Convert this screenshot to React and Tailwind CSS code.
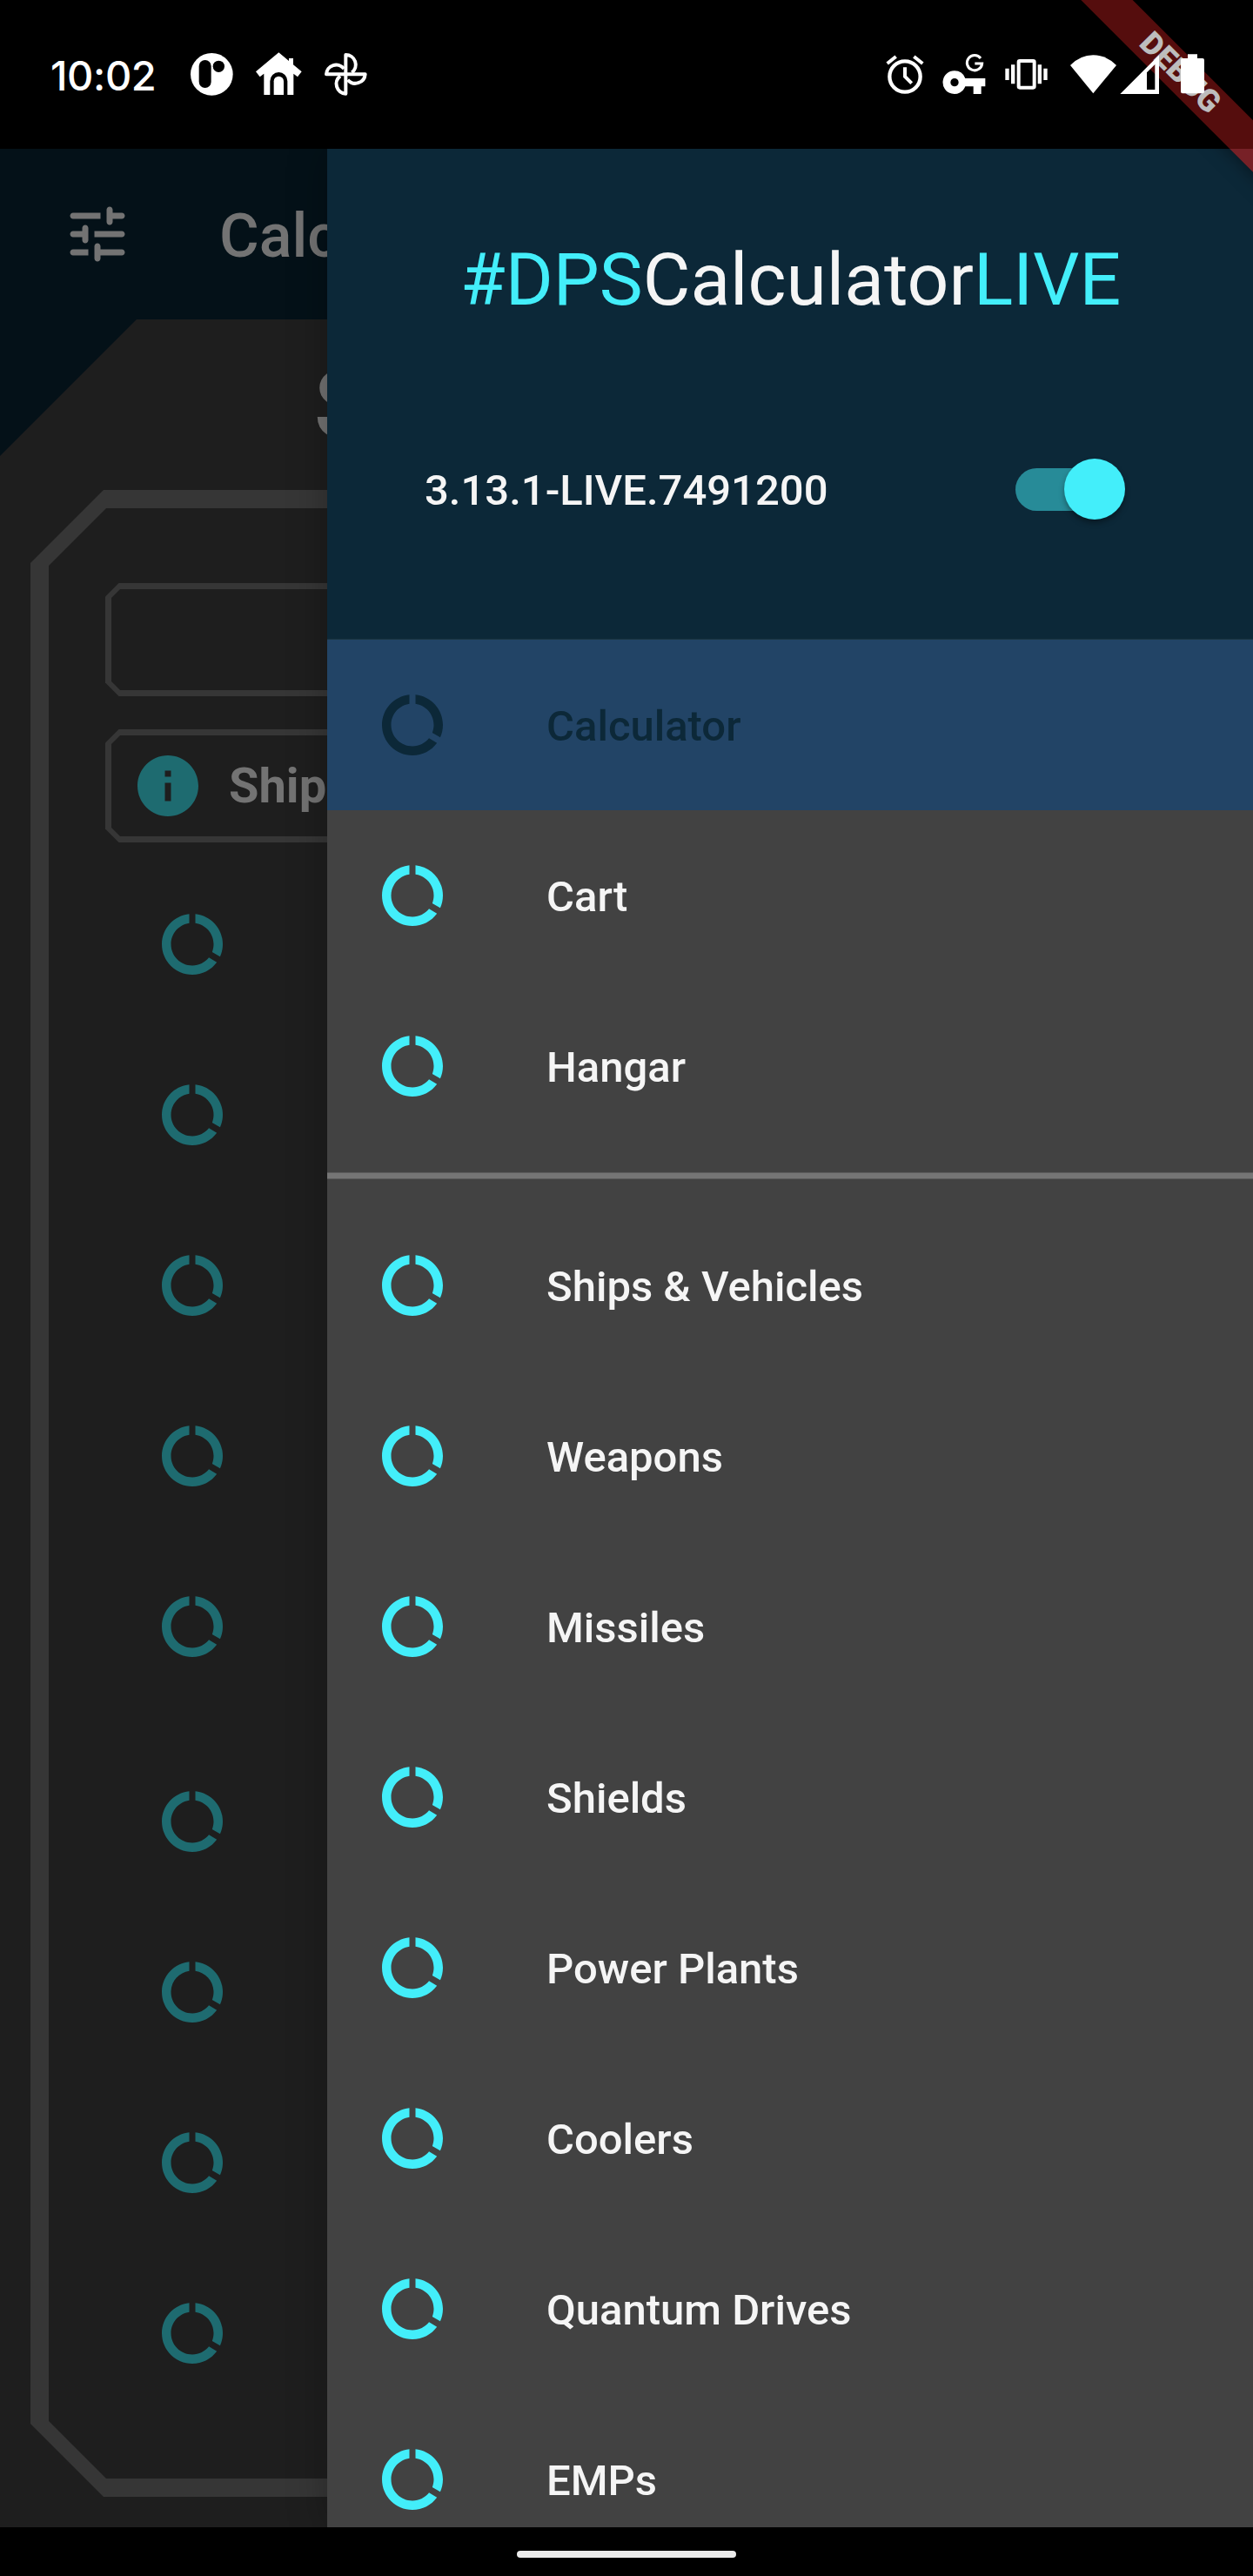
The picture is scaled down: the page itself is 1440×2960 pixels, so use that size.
const DATA_USAGE =
  "M13 2.05v3.03c3.39.49 6 3.39 6 6.92 0 .9-.18 1.75-.48 2.54l2.6 1.53c.56-1.24.88-2.62.88-4.07 0-5.18-3.95-9.45-9-9.95zM12 19c-3.87 0-7-3.13-7-7 0-3.53 2.61-6.43 6-6.92V2.05c-5.06.5-9 4.76-9 9.95 0 5.52 4.47 10 9.99 10 3.31 0 6.24-1.61 8.06-4.09l-2.6-1.53C16.17 17.98 14.21 19 12 19z";
const INFO =
  "M12 2C6.48 2 2 6.48 2 12s4.48 10 10 10 10-4.48 10-10S17.52 2 12 2zm1 15h-2v-6h2v6zm0-8h-2V7h2v2z";
const TUNE =
  "M3 18c0 .55.45 1 1 1h5v-2H4c-.55 0-1 .45-1 1zM3 6c0 .55.45 1 1 1h9V5H4c-.55 0-1 .45-1 1zm10 14v-1h7c.55 0 1-.45 1-1s-.45-1-1-1h-7v-1c0-.55-.45-1-1-1s-1 .45-1 1v4c0 .55.45 1 1 1s1-.45 1-1zM7 10v1H4c-.55 0-1 .45-1 1s.45 1 1 1h3v1c0 .55.45 1 1 1s1-.45 1-1v-4c0-.55-.45-1-1-1s-1 .45-1 1zm14 2c0-.55-.45-1-1-1h-9v2h9c.55 0 1-.45 1-1zm-5-3c.55 0 1-.45 1-1V7h3c.55 0 1-.45 1-1s-.45-1-1-1h-3V4c0-.55-.45-1-1-1s-1 .45-1 1v4c0 .55.45 1 1 1z";

function Icon({ d, className }) {
  return (
    <svg viewBox="0 0 24 24" className={"size-[84px] shrink-0 fill-current " + className}>
      <path d={d} />
    </svg>
  );
}

function StatusBar() {
  return (
    <div className="relative z-30 flex h-[171px] shrink-0 items-start bg-black/26 pl-[58px] pr-[55px] text-white">
      <span className="mt-[57px] w-[160px] font-['Inter'] text-[47px] font-medium leading-[60px] tracking-[-0.4px]">
        10:02
      </span>
      <div className="mt-[60px] flex gap-6">
        <svg viewBox="654 180 153 153" className="h-[51px] w-[51px]">
          <circle cx="730" cy="256" r="73" fill="#fff" />
          <rect x="686" y="207" width="42" height="96" rx="21" fill="#000" />
          <circle cx="754" cy="229" r="20" fill="#000" />
        </svg>
        <svg viewBox="879 180 165 153" className="h-[51px] w-[55px]" fill="#fff">
          <path d="M961 181L996 210V201H1011V223L1040 247L1026 265L1012 254V327H991V280A30 31 0 0 0 931 280V327H910V254L896 265L882 247Z" />
          <path d="M944 327V280A17 17 0 0 1 978 280V327Z" />
        </svg>
        <svg viewBox="1116 180 153 153" className="h-[51px] w-[51px]" fill="none" stroke="#fff" strokeWidth="12" strokeLinejoin="round">
          <path d="M1192 256V189A34 34 0 0 1 1213 250" />
          <path d="M1192 256H1125A34 34 0 0 1 1186 237" />
          <path d="M1192 256V323A34 34 0 0 1 1173 262" />
          <path d="M1192 256H1259A34 34 0 0 1 1199 275" />
        </svg>
      </div>
      <div className="ml-auto mt-[60px] flex">
        <svg viewBox="114 180 132 153" className="mr-[21px] h-[51px] w-[44px]" fill="none" stroke="#fff">
          <circle cx="180" cy="264" r="53" strokeWidth="13" />
          <path d="M180 232V264L203 287" strokeWidth="12" />
          <path d="M119 219L149 195M211 195L241 219" strokeWidth="12" />
        </svg>
        <svg viewBox="309 180 150 153" className="mr-[21px] h-[51px] w-[50px]">
          <path
            fill="#fff"
            fillRule="evenodd"
            d="M351 244A40 40 0 0 1 388 270H457V298H443V324H416V298H388A40 40 0 1 1 351 244ZM351 270A14 14 0 1 0 351 298A14 14 0 1 0 351 270Z"
          />
          <path d="M441 201A26 26 0 1 0 446 219H421" fill="none" stroke="#fff" strokeWidth="9" />
        </svg>
        <svg viewBox="522 180 150 153" className="mr-[25px] h-[51px] w-[50px]" fill="#fff">
          <rect x="572" y="210" width="54" height="92" rx="4" fill="none" stroke="#fff" strokeWidth="12" />
          <path d="M546 223H559V289H546ZM638 223H651V289H638ZM526 236H539V276H526ZM658 236H671V276H658Z" />
        </svg>
        <svg viewBox="747 180 165 153" className="mr-[3px] h-[51px] w-[55px]" fill="#fff">
          <path d="M829 322L750 225Q785 190 829 190T909 225Z" />
        </svg>
        <svg viewBox="921 180 135 153" className="mr-6 h-[51px] w-[45px]" fill="#fff">
          <path fillRule="evenodd" d="M922 324L1056 190V324ZM1014 309H1042V222L1014 250Z" />
        </svg>
        <svg viewBox="1128 180 87 153" className="h-[51px] w-[29px]" fill="#fff">
          <path d="M1155 187H1188V201H1206Q1212 201 1212 207V316Q1212 322 1206 322H1137Q1131 322 1131 316V207Q1131 201 1137 201H1155Z" />
        </svg>
      </div>
    </div>
  );
}

function DebugBanner() {
  return (
    <div className="pointer-events-none absolute right-0 top-0 z-20 h-[240px] w-[240px] overflow-hidden">
      <div className="absolute left-[-94px] top-[63px] flex h-[42px] w-[500px] rotate-45 items-center justify-center bg-[#b71c1ca0] font-['Roboto'] text-[35.700px] font-black leading-none text-white shadow-[0_0_21px_rgba(0,0,0,0.5)]">
        DEBUG
      </div>
    </div>
  );
}

function CutBox({ className, children }) {
  return (
    <div className={"h-[130px] w-[1198px] bg-[#363636] p-[7px] [clip-path:polygon(15.5px_0,100%_0,100%_100%,15.5px_100%,0_114.5px,0_15.5px)] " + className}>
      <div className="flex h-full items-center bg-[#1e1e1e] [clip-path:polygon(10px_0,100%_0,100%_100%,10px_100%,0_106px,0_10px)]">
        {children}
      </div>
    </div>
  );
}

function Backdrop() {
  return (
    <div className="w-[376px] shrink-0 overflow-hidden bg-[#041118] text-[#737373]">
      <div className="flex h-[196px] items-center pl-[70px]">
        <Icon d={TUNE} className="" />
        <span className="ml-[98px] mt-1 text-[70px] font-medium leading-[82px]">Calculator</span>
      </div>
      <div className="h-[2537px] w-[1440px] bg-[#1e1e1e] [clip-path:polygon(157px_0,100%_0,100%_100%,0_100%,0_157px)]">
        <div className="flex h-[196px] items-center pl-[361px] text-[112px] font-bold leading-[131px]">S</div>
        <div className="ml-[35px] h-[2306px] w-[1370px] bg-[#363636] p-[21px] [clip-path:polygon(84px_0,100%_0,100%_100%,84px_100%,0_2222px,0_84px)]">
          <div className="h-full bg-[#1e1e1e] pl-[65px] pt-[86px] [clip-path:polygon(66px_0,100%_0,100%_100%,66px_100%,0_2198px,0_66px)]">
            <CutBox className="" />
            <CutBox className="mt-[38px]">
              <Icon d={INFO} className="ml-[23px] text-[#1e6b70]" />
              <span className="ml-[28px] text-[56px] font-bold leading-[66px]">Ship</span>
            </CutBox>
            <div className="ml-[58px] mt-[19px] text-[#1e6b70]">
              {[0, 1, 2, 3, 4].map((i) => (
                <div key={i} className="flex h-[196px] items-center">
                  <Icon d={DATA_USAGE} className="" />
                </div>
              ))}
              <div className="h-7" />
              {[5, 6, 7, 8].map((i) => (
                <div key={i} className="flex h-[196px] items-center">
                  <Icon d={DATA_USAGE} className="" />
                </div>
              ))}
            </div>
          </div>
        </div>
      </div>
    </div>
  );
}

function Item({ label, selected }) {
  return (
    <div className={"flex h-[196px] shrink-0 items-center pl-14 " + (selected ? "bg-[#224466] text-[#0c2838]" : "text-[#f5f5f5]")}>
      <Icon d={DATA_USAGE} className={selected ? "text-[#0c2838]" : "text-[#43eefa]"} />
      <span className="ml-28 mt-1 text-[49px] font-medium leading-[56px]">{label}</span>
    </div>
  );
}

const CATEGORIES = ["Ships & Vehicles", "Weapons", "Missiles", "Shields", "Power Plants", "Coolers", "Quantum Drives", "EMPs"];

function Drawer() {
  return (
    <div className="relative z-10 flex w-[1064px] flex-col bg-[#424242] shadow-[0_0_42px_rgba(0,0,0,0.28)]">
      <div className="h-[564px] shrink-0 border-b border-[#1b343f] bg-[#0c2838] pt-[102px]">
        <h1 className="ml-[153px] whitespace-nowrap text-[84px] leading-[98px] text-[#f5f5f5]">
          <span className="text-[#43eefa]">#DPS</span>Calculator<span className="text-[#43eefa]">LIVE</span>
        </h1>
        <div className="mt-[149px] flex h-[84px] items-center pl-28 pr-[147px] text-[#f5f5f5]">
          <span className="mt-1 text-[49px] font-medium leading-[56px]">3.13.1-LIVE.7491200</span>
          <div className="ml-auto flex h-[49px] w-[126px] items-center justify-end rounded-l-full bg-[linear-gradient(to_right,#278b98_80px,transparent_80px)]">
            <div className="size-[70px] shrink-0 rounded-full bg-[#43eefa] shadow-[0_4px_6px_rgba(0,0,0,0.35)]" />
          </div>
        </div>
      </div>
      <Item label="Calculator" selected />
      <Item label="Cart" />
      <Item label="Hangar" />
      <div className="flex h-14 shrink-0 flex-col justify-center">
        <div className="h-2 border-y border-[#5c5c5c] bg-[#757575]" />
      </div>
      {CATEGORIES.map((c) => (
        <Item key={c} label={c} />
      ))}
    </div>
  );
}

export default function App() {
  return (
    <div className="relative flex h-[2960px] w-[1440px] flex-col overflow-hidden bg-black font-['Roboto',sans-serif]">
      <DebugBanner />
      <StatusBar />
      <div className="flex h-[2733px] shrink-0 overflow-hidden">
        <Backdrop />
        <Drawer />
      </div>
      <div className="relative z-30 flex h-14 justify-center bg-black pt-[27px]">
        <div className="h-2 w-[252px] rounded-full bg-[#ebebeb]" />
      </div>
    </div>
  );
}
